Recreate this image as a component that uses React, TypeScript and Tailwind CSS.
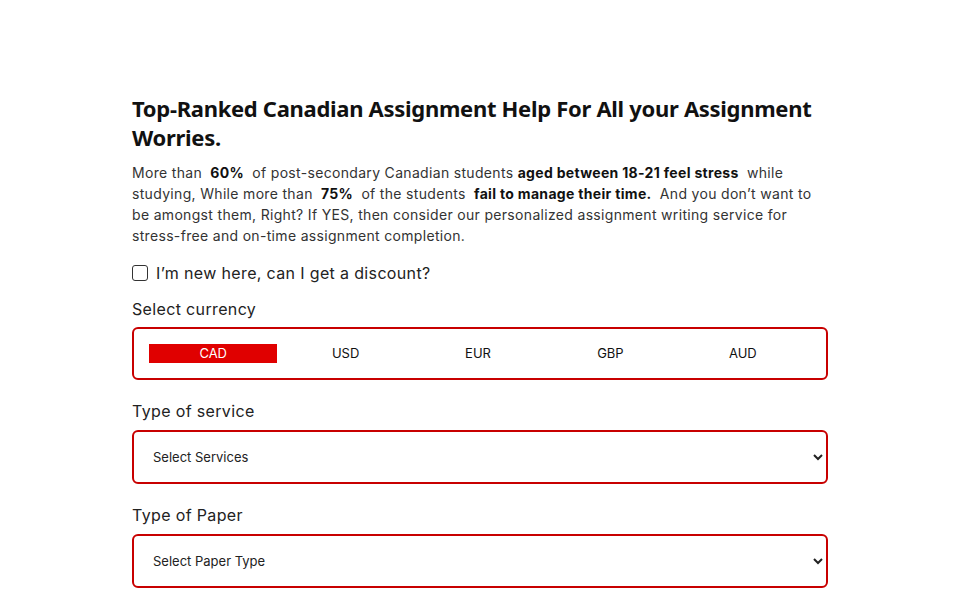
import React, { useState } from "react";

export default function App() {
  const [cur, setCur] = useState("CAD");
  const currencies = ["CAD", "USD", "EUR", "GBP", "AUD"];
  return (
    <div className="min-h-[600px] bg-white text-[#222] tracking-[0.35px]" style={{ fontFamily: "Inter, 'Noto Sans', sans-serif" }}>
      <div className="w-[696px] ml-[132px] pt-[94px]">
        <h1 className="text-[22px] leading-[29px] font-bold text-[#111] tracking-[-0.3px]" style={{ fontFamily: "'Noto Sans', sans-serif" }}>
          Top-Ranked Canadian Assignment Help For All your Assignment Worries.
        </h1>
        <p className="mt-[10px] text-[14px] leading-[21px] text-[#333] tracking-[0.32px]">
          More than <b className="font-bold text-[#111] mx-[4px]">60%</b> of post-secondary Canadian students{" "}
          <b className="font-bold text-[#111] mr-[4px]">aged between 18-21 feel stress</b> while studying, While more than{" "}
          <b className="font-bold text-[#111] mx-[4px]">75%</b> of the students{" "}
          <b className="font-bold text-[#111] ml-[4px] mr-[4px]">fail to manage their time.</b> And you don’t want to be amongst them, Right? If YES, then consider our personalized assignment writing service for stress-free and on-time assignment completion.
        </p>
        <label className="mt-[15px] flex items-center gap-[8px] text-[16px] leading-[24px] text-[#222]">
          <span className="w-[16px] h-[16px] rounded-[3px] border border-[#333] bg-white inline-block" />
          I’m new here, can I get a discount?
        </label>
        <div className="mt-[12px] text-[16px] leading-[24px] text-[#222]">Select currency</div>
        <div className="mt-[6px] h-[53px] border-2 border-[#c80000] rounded-[6px] px-[15px] flex items-center">
          {currencies.map((c) => (
            <button
              key={c}
              onClick={() => setCur(c)}
              className={
                "flex-1 h-[19px] text-[13px] leading-[19px] text-center mr-[4px] tracking-normal " +
                (cur === c ? "bg-[#e00000] text-white" : "bg-transparent text-[#111]")
              }
            >
              {c}
            </button>
          ))}
        </div>
        <div className="mt-[19px] text-[16px] leading-[24px] text-[#222]">Type of service</div>
        <select className="mt-[7px] w-full h-[54px] border-2 border-[#c80000] rounded-[6px] bg-white pl-[15px] pr-[1px] text-[13px] text-[#222] tracking-normal">
          <option>Select Services</option>
        </select>
        <div className="mt-[19px] text-[16px] leading-[24px] text-[#222]">Type of Paper</div>
        <select className="mt-[7px] w-full h-[54px] border-2 border-[#c80000] rounded-[6px] bg-white pl-[15px] pr-[1px] text-[13px] text-[#222] tracking-normal">
          <option>Select Paper Type</option>
        </select>
      </div>
    </div>
  );
}
